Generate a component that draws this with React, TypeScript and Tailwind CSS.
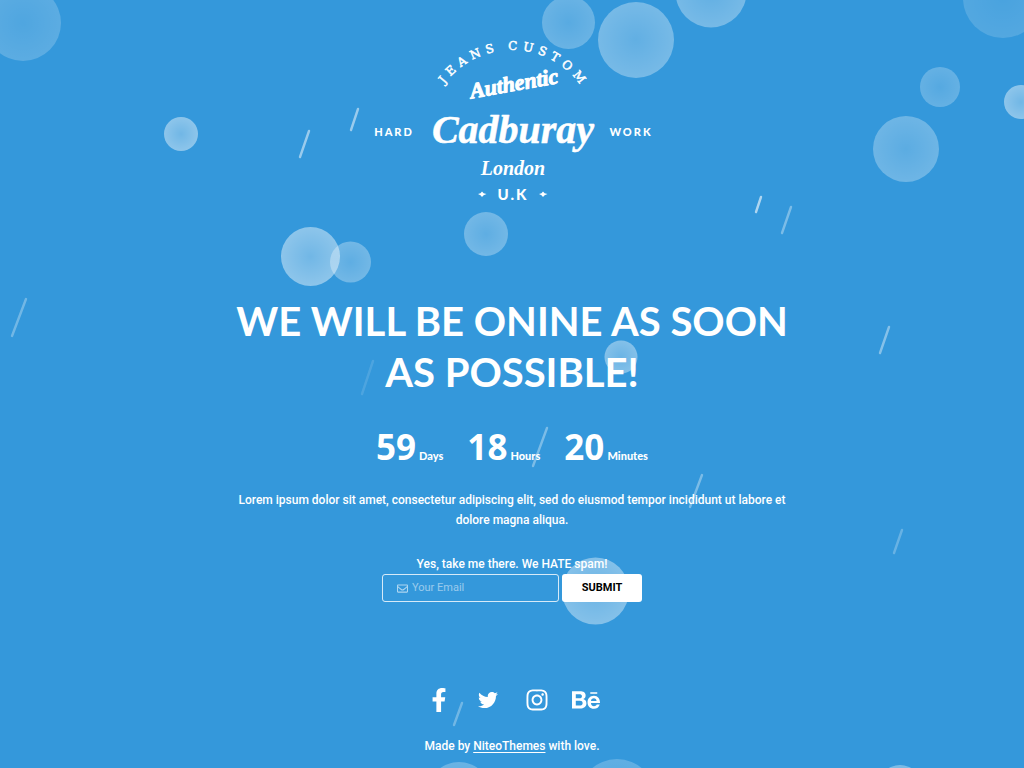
import { FaBehance, FaFacebookF, FaInstagram, FaRegEnvelope, FaTwitter } from "react-icons/fa";

const bubbles = [
  { cx: 23, cy: 23, r: 38, o: 0.45 },
  { cx: 181, cy: 134, r: 17, o: 1 },
  { cx: 310.5, cy: 256.5, r: 29.5, o: 1 },
  { cx: 350.5, cy: 262, r: 20.5, o: 0.7 },
  { cx: 486, cy: 234, r: 22, o: 0.7 },
  { cx: 568.5, cy: 22.5, r: 26.5, o: 0.6 },
  { cx: 636, cy: 40, r: 38, o: 0.75 },
  { cx: 711, cy: -8, r: 35.5, o: 0.75 },
  { cx: 1003, cy: -2, r: 40, o: 0.35 },
  { cx: 940, cy: 87, r: 20, o: 0.55 },
  { cx: 1021, cy: 102, r: 17, o: 1 },
  { cx: 906, cy: 149, r: 33, o: 0.65 },
  { cx: 621, cy: 357, r: 16.5, o: 0.9 },
  { cx: 595.5, cy: 591, r: 33.5, o: 0.9 },
  { cx: 459, cy: 794, r: 32, o: 0.6 },
  { cx: 617, cy: 797, r: 38, o: 0.5 },
  { cx: 900, cy: 787, r: 22, o: 0.8 },
];

const streaks = [
  { x1: 300, y1: 157, x2: 309, y2: 131, o: 0.5 },
  { x1: 351, y1: 130, x2: 358, y2: 109, o: 0.5 },
  { x1: 756, y1: 212, x2: 761, y2: 197, o: 0.6 },
  { x1: 782, y1: 233, x2: 791, y2: 207, o: 0.35 },
  { x1: 12, y1: 336, x2: 26, y2: 299, o: 0.3 },
  { x1: 362, y1: 394, x2: 373, y2: 361, o: 0.12 },
  { x1: 533, y1: 466, x2: 547, y2: 428, o: 0.35 },
  { x1: 690, y1: 507, x2: 702, y2: 475, o: 0.35 },
  { x1: 880, y1: 353, x2: 889, y2: 327, o: 0.4 },
  { x1: 894, y1: 553, x2: 902, y2: 530, o: 0.25 },
  { x1: 454, y1: 725, x2: 462, y2: 703, o: 0.3 },
];

function Backdrop() {
  return (
    <svg
      aria-hidden="true"
      className="absolute inset-0 h-full w-full"
      viewBox="0 0 1024 768"
      preserveAspectRatio="xMidYMid slice"
    >
      <defs>
        <radialGradient id="bubble">
          <stop offset="0" stopColor="#fff" stopOpacity="0.3" />
          <stop offset="1" stopColor="#fff" stopOpacity="0.44" />
        </radialGradient>
      </defs>
      {bubbles.map((b) => (
        <circle key={`${b.cx}-${b.cy}`} cx={b.cx} cy={b.cy} r={b.r} fill="url(#bubble)" opacity={b.o} />
      ))}
      {streaks.map((s) => (
        <line
          key={`${s.x1}-${s.y1}`}
          x1={s.x1}
          y1={s.y1}
          x2={s.x2}
          y2={s.y2}
          stroke="#fff"
          strokeWidth="2.4"
          strokeLinecap="round"
          opacity={s.o}
        />
      ))}
    </svg>
  );
}

function Logo() {
  return (
    <svg
      role="img"
      aria-label="Cadburay London"
      className="h-[170px] w-[280px] fill-white"
      viewBox="372 36 280 170"
    >
      <defs>
        <path id="arch" d="M 428 134 A 84 84 0 0 1 596 134" />
      </defs>
      <g textAnchor="middle">
        <text className="stroke-white stroke-[0.5px] font-['DejaVu_Serif'] text-[12px] tracking-[5px]">
          <textPath href="#arch" startOffset="51%">
            JEANS CUSTOM
          </textPath>
        </text>
        <text
          transform="rotate(-10 513 84)"
          x="514"
          y="91"
          className="stroke-white stroke-1 font-['Liberation_Serif'] text-[22px] font-bold italic [stroke-linejoin:round]"
        >
          Authentic
        </text>
        <text
          x="513"
          y="143"
          className="stroke-white stroke-[0.5px] font-['Liberation_Serif'] text-[40px] font-bold italic [stroke-linejoin:round]"
        >
          Cadburay
        </text>
        <text x="513" y="175" className="font-['Liberation_Serif'] text-[20px] font-bold italic">
          London
        </text>
        <text x="394" y="136" className="font-['Lato'] text-[11px] font-black tracking-[2px]">
          HARD
        </text>
        <text x="631" y="136" className="font-['Lato'] text-[11px] font-black tracking-[2px]">
          WORK
        </text>
        <text x="513" y="200" className="font-['Lato'] text-[15px] font-black tracking-[2px]">
          U.K
        </text>
      </g>
      <path d="M478 194 Q481 193.5 482 191.5 Q483 193.5 486.5 194 Q483 195 482 197 Q481 195 478 194Z" />
      <path d="M539 194 Q542 193.5 543 191.5 Q544 193.5 547.5 194 Q544 195 543 197 Q542 195 539 194Z" />
    </svg>
  );
}

const countdown = [
  { value: 59, unit: "Days" },
  { value: 18, unit: "Hours" },
  { value: 20, unit: "Minutes" },
];

const socials = [
  { name: "Facebook", Icon: FaFacebookF, size: "size-6" },
  { name: "Twitter", Icon: FaTwitter, size: "size-5" },
  { name: "Instagram", Icon: FaInstagram, size: "size-6" },
  { name: "Behance", Icon: FaBehance, size: "size-7" },
];

export default function App() {
  return (
    <main className="relative flex min-h-screen flex-col items-center overflow-hidden bg-[#3498db] px-6 pt-9 font-['Roboto',sans-serif] text-[12px] font-medium text-white">
      <Backdrop />
      <div className="relative flex w-full max-w-[570px] flex-col items-center text-center">
        <Logo />
        <h1 className="mt-[90px] font-['Lato',sans-serif] text-[40px] leading-[51px] font-bold">
          WE WILL BE ONINE AS SOON AS POSSIBLE!
        </h1>

        <div className="mt-6 flex gap-6 font-['Noto_Sans',sans-serif] font-bold">
          {countdown.map((c) => (
            <div key={c.unit} className="flex items-baseline gap-[3px]">
              <span className="text-[35px] leading-[50px]">{c.value}</span>
              <span className="font-['Lato',sans-serif] text-[11px] font-black">{c.unit}</span>
            </div>
          ))}
        </div>

        <p className="mt-[18px] leading-5">
          Lorem ipsum dolor sit amet, consectetur adipiscing elit, sed do eiusmod tempor incididunt ut labore et
          dolore magna aliqua.
        </p>

        <form className="mt-6 flex flex-col items-center" onSubmit={(e) => e.preventDefault()}>
          <label htmlFor="email" className="leading-5">
            Yes, take me there. We HATE spam!
          </label>
          <div className="flex gap-[3px]">
            <div className="flex h-7 w-[177px] items-center gap-1 rounded-[3px] border border-white/80 px-3.5">
              <FaRegEnvelope className="size-[11px] shrink-0 text-white/60" />
              <input
                id="email"
                type="email"
                placeholder="Your Email"
                className="w-full min-w-0 bg-transparent text-[11px] font-normal outline-none placeholder:text-white/50"
              />
            </div>
            <button type="submit" className="h-7 w-20 rounded-[3px] bg-white text-[11px] font-bold text-black">
              SUBMIT
            </button>
          </div>
        </form>

        <nav className="mt-[84px] flex h-7 items-center">
          {socials.map(({ name, Icon, size }) => (
            <a key={name} href="#" aria-label={name} className="flex w-[49px] justify-center">
              <Icon className={size} />
            </a>
          ))}
        </nav>
        <p className="mt-[22px] leading-5">
          Made by{" "}
          <a href="#" className="underline underline-offset-2">
            NiteoThemes
          </a>{" "}
          with love.
        </p>
      </div>
    </main>
  );
}
